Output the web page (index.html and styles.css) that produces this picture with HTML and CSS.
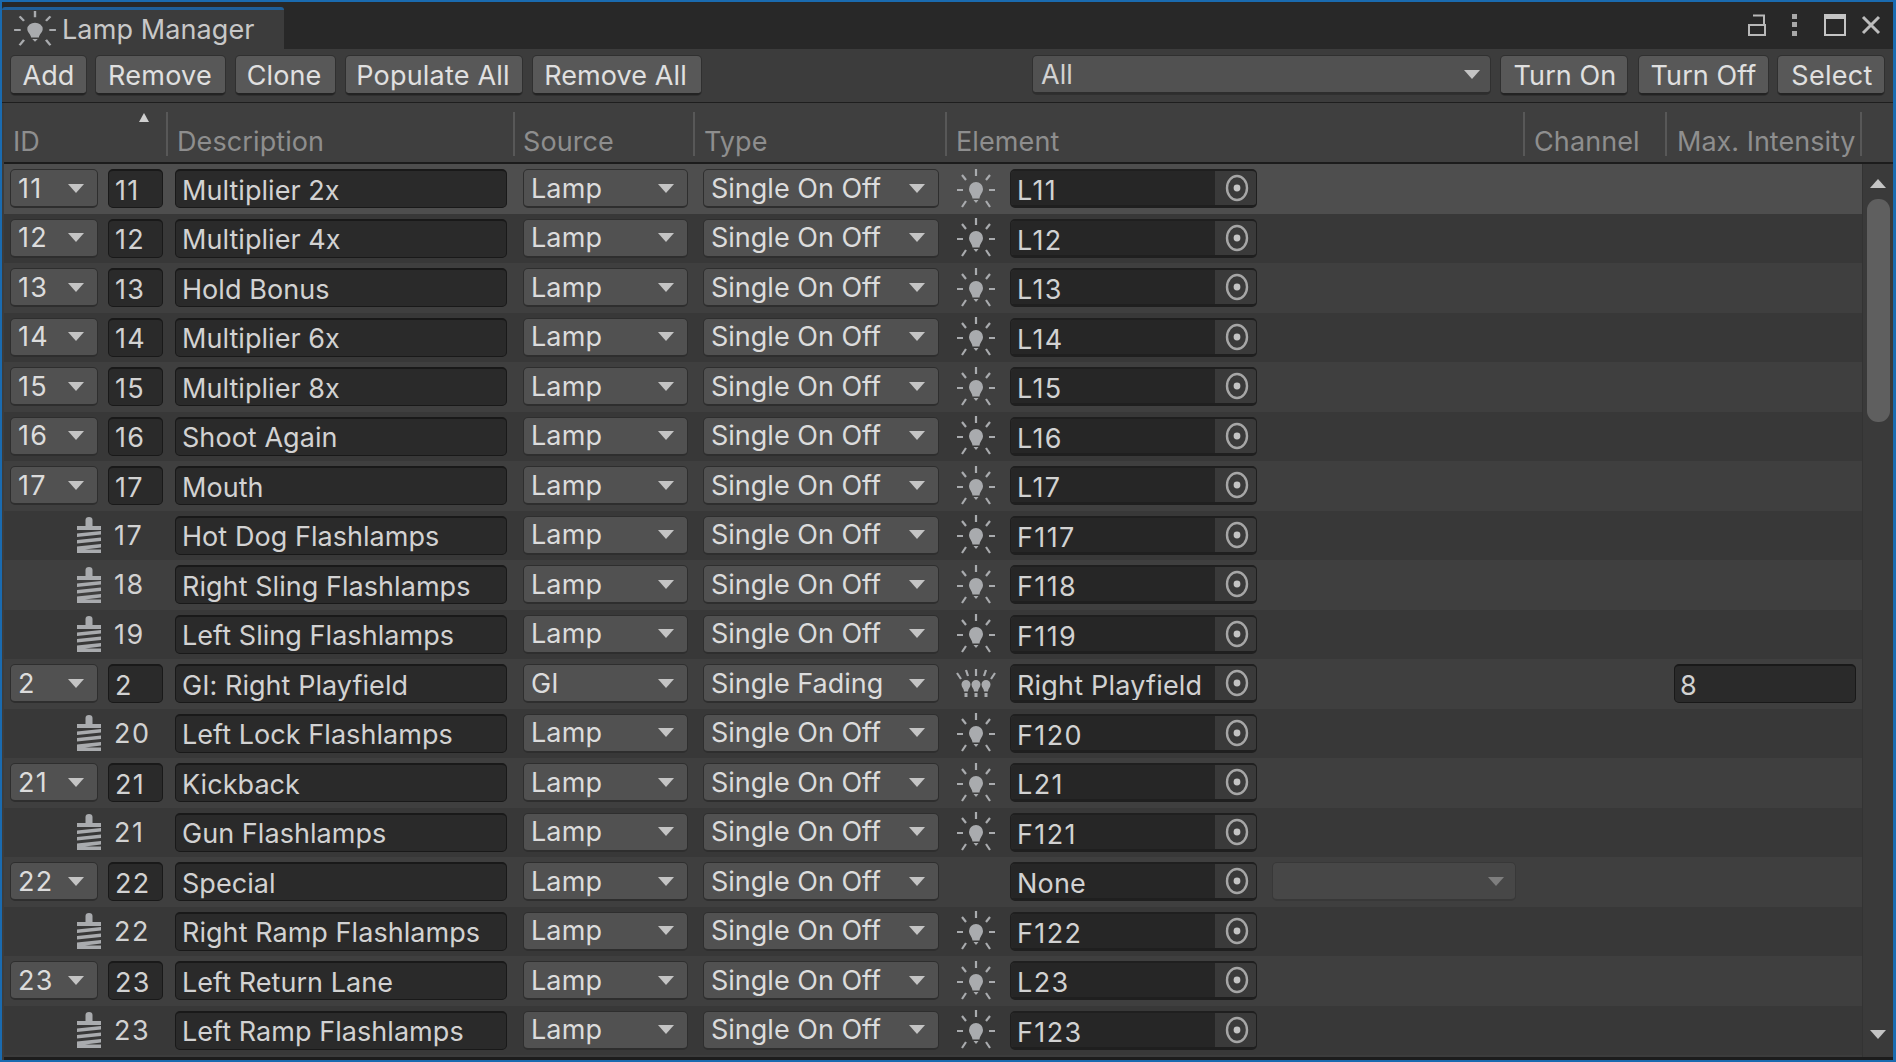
FILE: index.html
```html
<!DOCTYPE html>
<html lang="en">
<head>
    <meta charset="UTF-8">
    <title>Lamp Manager</title>
    <link rel="stylesheet" href="styles.css">
</head>
<body>
    <svg class="defs" width="0" height="0">
        <symbol id="lamp" viewBox="0 0 40 42" preserveAspectRatio="none">
            <path d="M20 14a7 7 0 0 1 7 7c0 3.500-3 5.500-3.500 9.500h-7c-.5-4-3.500-6-3.500-9.500A7 7 0 0 1 20 14z" fill="#a9abae"/>
            <path d="M17.500 32h5l-2.500 3z" fill="#a9abae"/>
            <path d="M20 1v7M1 22h6M33 22h6M6 7l4 5M34 7l-4 5M6 39l4-6M34 39l-4-6" stroke="#a9abae" stroke-width="2.200" fill="none"/>
        </symbol>
        <symbol id="multi" viewBox="0 0 40 32">
            <g fill="#a9abae">
                <path d="M10 12a4.500 4.500 0 0 1 4.500 4.500c0 3-2.500 4-2.500 7H8c0-3-2.500-4-2.500-7A4.500 4.500 0 0 1 10 12zM8.500 25h3v4h-3z"/>
                <path d="M20 12a4.500 4.500 0 0 1 4.500 4.500c0 3-2.500 4-2.500 7h-4c0-3-2.500-4-2.500-7A4.500 4.500 0 0 1 20 12zM18.500 25h3v4h-3z"/>
                <path d="M30 12a4.500 4.500 0 0 1 4.500 4.500c0 3-2.500 4-2.500 7h-4c0-3-2.500-4-2.500-7A4.500 4.500 0 0 1 30 12zM28.500 25h3v4h-3z"/>
            </g>
            <path d="M20 1v7M10 2l2 6M30 2l-2 6M1 5l4 6M39 5l-4 6" stroke="#a9abae" stroke-width="2.200" fill="none"/>
        </symbol>
        <symbol id="coil" viewBox="0 0 24 36">
            <path d="M8.500 3a3.500 3 0 0 1 7 0v6H24v4H0V9h8.500z" fill="#a9abae"/>
            <path d="M0 16.500L24 14v3.500L0 20zM0 23l24-2.500V24L0 26.500zM0 29.500L24 27v3.500L8 32.500h16V36H0z" fill="#a9abae"/>
        </symbol>
        <symbol id="target" viewBox="0 0 24 28">
            <ellipse cx="12" cy="14" rx="10" ry="12" fill="none" stroke="#a6a6a6" stroke-width="2.400"/>
            <circle cx="12" cy="14" r="3.400" fill="#c4c4c4"/>
        </symbol>
    </svg>

    <div class="window">
        <div class="titlebar">
            <div class="tab">
                <svg class="tab-icon"><use href="#lamp"/></svg>
                <span>Lamp Manager</span>
            </div>
            <div class="window-icons">
                <svg class="icon-lock" width="18" height="22" viewBox="0 0 18 22"><path d="M5 1.500h11V11M1 11h16v10H1z" fill="none" stroke="#b8b8b8" stroke-width="2"/></svg>
                <svg class="icon-dots" width="7" height="22" viewBox="0 0 7 22"><path d="M1 0h5v5H1zM1 8h5v5H1zM1 17h5v5H1z" fill="#a8a8a8"/></svg>
                <svg class="icon-max" width="22" height="22" viewBox="0 0 22 22"><path d="M0 0h22v5H0z" fill="#c4c4c4"/><path d="M1 4v17h20V4" fill="none" stroke="#c4c4c4" stroke-width="2"/></svg>
                <svg class="icon-close" width="20" height="20" viewBox="0 0 20 20"><path d="M2 2l16 16M18 2L2 18" stroke="#bcbcbc" stroke-width="3"/></svg>
            </div>
        </div>

        <div class="toolbar">
            <div class="btn btn-add">Add</div>
            <div class="btn btn-remove">Remove</div>
            <div class="btn btn-clone">Clone</div>
            <div class="btn btn-populate">Populate All</div>
            <div class="btn btn-removeall">Remove All</div>
            <div class="filter"><span>All</span><i class="arrow"></i></div>
            <div class="btn btn-on">Turn On</div>
            <div class="btn btn-off">Turn Off</div>
            <div class="btn btn-select">Select</div>
        </div>

        <div class="table-head">
            <div class="th th-id">ID<i class="sort"></i></div>
            <div class="th th-desc">Description</div>
            <div class="th th-source">Source</div>
            <div class="th th-type">Type</div>
            <div class="th th-element">Element</div>
            <div class="th th-channel">Channel</div>
            <div class="th th-max">Max. Intensity</div>
        </div>

        <div class="table-body">
            <div class="rows">
                <div class="row current">
                    <div class="drop c-id"><span>11</span><i class="arrow"></i></div><div class="field c-num">11</div><div class="field c-desc">Multiplier 2x</div><div class="drop c-source"><span>Lamp</span><i class="arrow"></i></div><div class="drop c-type"><span>Single On Off</span><i class="arrow"></i></div><svg class="c-icon"><use href="#lamp"/></svg><div class="elem"><span>L11</span><b><svg><use href="#target"/></svg></b></div>
                </div>
                <div class="row">
                    <div class="drop c-id"><span>12</span><i class="arrow"></i></div><div class="field c-num">12</div><div class="field c-desc">Multiplier 4x</div><div class="drop c-source"><span>Lamp</span><i class="arrow"></i></div><div class="drop c-type"><span>Single On Off</span><i class="arrow"></i></div><svg class="c-icon"><use href="#lamp"/></svg><div class="elem"><span>L12</span><b><svg><use href="#target"/></svg></b></div>
                </div>
                <div class="row">
                    <div class="drop c-id"><span>13</span><i class="arrow"></i></div><div class="field c-num">13</div><div class="field c-desc">Hold Bonus</div><div class="drop c-source"><span>Lamp</span><i class="arrow"></i></div><div class="drop c-type"><span>Single On Off</span><i class="arrow"></i></div><svg class="c-icon"><use href="#lamp"/></svg><div class="elem"><span>L13</span><b><svg><use href="#target"/></svg></b></div>
                </div>
                <div class="row">
                    <div class="drop c-id"><span>14</span><i class="arrow"></i></div><div class="field c-num">14</div><div class="field c-desc">Multiplier 6x</div><div class="drop c-source"><span>Lamp</span><i class="arrow"></i></div><div class="drop c-type"><span>Single On Off</span><i class="arrow"></i></div><svg class="c-icon"><use href="#lamp"/></svg><div class="elem"><span>L14</span><b><svg><use href="#target"/></svg></b></div>
                </div>
                <div class="row">
                    <div class="drop c-id"><span>15</span><i class="arrow"></i></div><div class="field c-num">15</div><div class="field c-desc">Multiplier 8x</div><div class="drop c-source"><span>Lamp</span><i class="arrow"></i></div><div class="drop c-type"><span>Single On Off</span><i class="arrow"></i></div><svg class="c-icon"><use href="#lamp"/></svg><div class="elem"><span>L15</span><b><svg><use href="#target"/></svg></b></div>
                </div>
                <div class="row">
                    <div class="drop c-id"><span>16</span><i class="arrow"></i></div><div class="field c-num">16</div><div class="field c-desc">Shoot Again</div><div class="drop c-source"><span>Lamp</span><i class="arrow"></i></div><div class="drop c-type"><span>Single On Off</span><i class="arrow"></i></div><svg class="c-icon"><use href="#lamp"/></svg><div class="elem"><span>L16</span><b><svg><use href="#target"/></svg></b></div>
                </div>
                <div class="row">
                    <div class="drop c-id"><span>17</span><i class="arrow"></i></div><div class="field c-num">17</div><div class="field c-desc">Mouth</div><div class="drop c-source"><span>Lamp</span><i class="arrow"></i></div><div class="drop c-type"><span>Single On Off</span><i class="arrow"></i></div><svg class="c-icon"><use href="#lamp"/></svg><div class="elem"><span>L17</span><b><svg><use href="#target"/></svg></b></div>
                </div>
                <div class="row">
                    <div class="c-coil"><svg><use href="#coil"/></svg></div><div class="c-num plain">17</div><div class="field c-desc">Hot Dog Flashlamps</div><div class="drop c-source"><span>Lamp</span><i class="arrow"></i></div><div class="drop c-type"><span>Single On Off</span><i class="arrow"></i></div><svg class="c-icon"><use href="#lamp"/></svg><div class="elem"><span>F117</span><b><svg><use href="#target"/></svg></b></div>
                </div>
                <div class="row">
                    <div class="c-coil"><svg><use href="#coil"/></svg></div><div class="c-num plain">18</div><div class="field c-desc">Right Sling Flashlamps</div><div class="drop c-source"><span>Lamp</span><i class="arrow"></i></div><div class="drop c-type"><span>Single On Off</span><i class="arrow"></i></div><svg class="c-icon"><use href="#lamp"/></svg><div class="elem"><span>F118</span><b><svg><use href="#target"/></svg></b></div>
                </div>
                <div class="row">
                    <div class="c-coil"><svg><use href="#coil"/></svg></div><div class="c-num plain">19</div><div class="field c-desc">Left Sling Flashlamps</div><div class="drop c-source"><span>Lamp</span><i class="arrow"></i></div><div class="drop c-type"><span>Single On Off</span><i class="arrow"></i></div><svg class="c-icon"><use href="#lamp"/></svg><div class="elem"><span>F119</span><b><svg><use href="#target"/></svg></b></div>
                </div>
                <div class="row">
                    <div class="drop c-id"><span>2</span><i class="arrow"></i></div><div class="field c-num">2</div><div class="field c-desc">GI: Right Playfield</div><div class="drop c-source"><span>GI</span><i class="arrow"></i></div><div class="drop c-type"><span>Single Fading</span><i class="arrow"></i></div><svg class="c-icon multi"><use href="#multi"/></svg><div class="elem named"><span>Right Playfield</span><b><svg><use href="#target"/></svg></b></div><div class="field c-max">8</div>
                </div>
                <div class="row">
                    <div class="c-coil"><svg><use href="#coil"/></svg></div><div class="c-num plain">20</div><div class="field c-desc">Left Lock Flashlamps</div><div class="drop c-source"><span>Lamp</span><i class="arrow"></i></div><div class="drop c-type"><span>Single On Off</span><i class="arrow"></i></div><svg class="c-icon"><use href="#lamp"/></svg><div class="elem"><span>F120</span><b><svg><use href="#target"/></svg></b></div>
                </div>
                <div class="row">
                    <div class="drop c-id"><span>21</span><i class="arrow"></i></div><div class="field c-num">21</div><div class="field c-desc">Kickback</div><div class="drop c-source"><span>Lamp</span><i class="arrow"></i></div><div class="drop c-type"><span>Single On Off</span><i class="arrow"></i></div><svg class="c-icon"><use href="#lamp"/></svg><div class="elem"><span>L21</span><b><svg><use href="#target"/></svg></b></div>
                </div>
                <div class="row">
                    <div class="c-coil"><svg><use href="#coil"/></svg></div><div class="c-num plain">21</div><div class="field c-desc">Gun Flashlamps</div><div class="drop c-source"><span>Lamp</span><i class="arrow"></i></div><div class="drop c-type"><span>Single On Off</span><i class="arrow"></i></div><svg class="c-icon"><use href="#lamp"/></svg><div class="elem"><span>F121</span><b><svg><use href="#target"/></svg></b></div>
                </div>
                <div class="row">
                    <div class="drop c-id"><span>22</span><i class="arrow"></i></div><div class="field c-num">22</div><div class="field c-desc">Special</div><div class="drop c-source"><span>Lamp</span><i class="arrow"></i></div><div class="drop c-type"><span>Single On Off</span><i class="arrow"></i></div><div class="c-icon"></div><div class="elem named"><span>None</span><b><svg><use href="#target"/></svg></b></div><div class="drop c-channel"><span></span><i class="arrow"></i></div>
                </div>
                <div class="row">
                    <div class="c-coil"><svg><use href="#coil"/></svg></div><div class="c-num plain">22</div><div class="field c-desc">Right Ramp Flashlamps</div><div class="drop c-source"><span>Lamp</span><i class="arrow"></i></div><div class="drop c-type"><span>Single On Off</span><i class="arrow"></i></div><svg class="c-icon"><use href="#lamp"/></svg><div class="elem"><span>F122</span><b><svg><use href="#target"/></svg></b></div>
                </div>
                <div class="row">
                    <div class="drop c-id"><span>23</span><i class="arrow"></i></div><div class="field c-num">23</div><div class="field c-desc">Left Return Lane</div><div class="drop c-source"><span>Lamp</span><i class="arrow"></i></div><div class="drop c-type"><span>Single On Off</span><i class="arrow"></i></div><svg class="c-icon"><use href="#lamp"/></svg><div class="elem"><span>L23</span><b><svg><use href="#target"/></svg></b></div>
                </div>
                <div class="row">
                    <div class="c-coil"><svg><use href="#coil"/></svg></div><div class="c-num plain">23</div><div class="field c-desc">Left Ramp Flashlamps</div><div class="drop c-source"><span>Lamp</span><i class="arrow"></i></div><div class="drop c-type"><span>Single On Off</span><i class="arrow"></i></div><svg class="c-icon"><use href="#lamp"/></svg><div class="elem"><span>F123</span><b><svg><use href="#target"/></svg></b></div>
                </div>
            </div>
            <div class="scrollbar">
                <i class="scroll-up"></i>
                <div class="scroll-track"><div class="scroll-thumb"></div></div>
                <i class="scroll-down"></i>
            </div>
        </div>
    </div>
</body>
</html>
```

FILE: styles.css
```css
html, body {
    margin: 0;
    height: 100%;
    overflow: hidden;
}
body {
    font-family: Inter, "Noto Sans", sans-serif;
    font-size: 27px;
    letter-spacing: .1px;
    color: #d2d2d2;
    background: #1a6bb0;
}
.defs {
    position: absolute;
}
.window {
    box-sizing: border-box;
    width: 1896px;
    height: 1062px;
    border: solid #1a6bb0;
    border-width: 2px 3px 2px 2px;
    display: flex;
    flex-direction: column;
    background: #3c3c3c;
    overflow: hidden;
}

/* title bar */
.titlebar {
    height: 47px;
    flex: none;
    background: #282828;
    display: flex;
    align-items: flex-end;
    justify-content: space-between;
}
.tab {
    box-sizing: border-box;
    width: 282px;
    height: 42px;
    background: #3c3c3c;
    border-top: 3px solid #1f5f99;
    border-radius: 3px 3px 0 0;
    display: flex;
    align-items: center;
    padding-left: 11px;
    color: #c8c8c8;
}
.tab-icon {
    width: 44px;
    height: 38px;
    margin: -2px 5px 0 0;
    flex: none;
}
.window-icons {
    display: flex;
    align-items: center;
    padding: 0 12px 13px 0;
}
.icon-dots { margin-left: 25px; }
.icon-max { margin-left: 26px; }
.icon-close { margin-left: 15px; }

/* toolbar */
.toolbar {
    height: 54px;
    flex: none;
    display: flex;
    align-items: flex-start;
    padding-top: 7px;
    box-sizing: border-box;
    border-bottom: 1px solid #1e1e1e;
}
.btn {
    box-sizing: border-box;
    height: 39px;
    padding-top: 2px;
    background: #585858;
    border-bottom: 2px solid #232323;
    box-shadow: 0 0 0 1px #303030;
    border-radius: 4px;
    color: #e0e0e0;
    display: flex;
    align-items: center;
    justify-content: center;
    flex: none;
}
.btn-add { width: 75px; margin-left: 9px; }
.btn-remove { width: 129px; margin-left: 10px; padding-right: 1px; letter-spacing: .3px; }
.btn-clone { width: 99px; margin-left: 11px; padding-right: 3px; }
.btn-populate { width: 176px; margin-left: 11px; padding-right: 2px; letter-spacing: .2px; }
.btn-removeall { width: 168px; margin-left: 11px; padding-right: 3px; }
.btn-on { width: 126px; margin-left: 11px; padding-left: 2px; }
.btn-off { width: 129px; margin-left: 12px; }
.btn-select { width: 106px; margin-left: 10px; padding-left: 2px; letter-spacing: .3px; }
.filter {
    box-sizing: border-box;
    width: 457px;
    height: 38px;
    margin-left: 332px;
    background: #515151;
    border-bottom: 2px solid #2e2e2e;
    box-shadow: 0 0 0 1px #303030;
    border-radius: 4px;
    display: flex;
    align-items: center;
    justify-content: space-between;
    padding: 0 10px 0 8px;
    flex: none;
}
.arrow {
    width: 0;
    height: 0;
    border-left: 8px solid transparent;
    border-right: 8px solid transparent;
    border-top: 9px solid #c4c4c4;
    flex: none;
}

/* table header */
.table-head {
    height: 61px;
    flex: none;
    display: flex;
    margin-left: 2px;
    background: #3f3f3f;
    border-bottom: 2px solid #1c1c1c;
    box-sizing: border-box;
    color: #8e8e8e;
}
.th {
    box-sizing: border-box;
    position: relative;
    height: 44px;
    margin-top: 9px;
    padding: 13px 0 0 9px;
    line-height: 34px;
    border-right: 2px solid #585858;
    flex: none;
}
.th-id { width: 164px; padding-left: 9px; }
.th-desc { width: 347px; }
.th-source { width: 180px; padding-left: 8px; }
.th-type { width: 252px; }
.th-element { width: 578px; }
.th-channel { width: 142px; }
.th-max { width: 195px; padding-left: 10px; white-space: nowrap; letter-spacing: 0; }
.sort {
    position: absolute;
    left: 135px;
    top: 1px;
    border-left: 5px solid transparent;
    border-right: 5px solid transparent;
    border-bottom: 9px solid #d0d0d0;
}

/* rows */
.table-body {
    flex: 1;
    display: flex;
    min-height: 0;
    margin-left: 2px;
    border-bottom: 3px solid #1c1c1c;
}
.rows {
    flex: 1;
    min-width: 0;
    overflow: hidden;
}
.row {
    height: 49.5px;
    display: flex;
    align-items: center;
    padding-left: 6px;
    background: #383838;
}
.row:nth-child(odd) {
    background: #3f3f3f;
}
.row.current {
    background: #4e4e4e;
}
.drop, .field, .elem {
    box-sizing: border-box;
    height: 39px;
    border-radius: 5px;
    flex: none;
    display: flex;
    align-items: center;
}
.drop {
    background: #515151;
    border: 1px solid #2e2e2e;
    border-bottom-width: 2px;
    justify-content: space-between;
    padding: 0 13px 0 7px;
    color: #dcdcdc;
}
.field {
    background: #2a2a2a;
    border: 1px solid #191919;
    border-top-width: 2px;
    padding: 1.5px 0 0 6px;
    color: #d2d2d2;
}
.c-id span, .c-num {
    letter-spacing: 1.2px;
}
.c-id { width: 88px; }
.c-num { width: 55px; margin-left: 10px; }
.c-num.plain { padding-left: 6px; box-sizing: border-box; letter-spacing: 1.6px; }
.c-coil {
    width: 88px;
    display: flex;
    justify-content: flex-end;
    flex: none;
}
.c-coil svg {
    width: 24px;
    height: 36px;
    margin: 0 -3px 0 0;
}
.c-desc { width: 332px; margin-left: 12px; letter-spacing: .05px; }
.c-source { width: 165px; margin-left: 16px; }
.c-type { width: 236px; margin-left: 15px; letter-spacing: 0; }
.c-icon {
    width: 40px;
    height: 42px;
    margin: 0 14px 0 17px;
    flex: none;
}
.c-icon.multi {
    height: 32px;
}
.elem {
    width: 247px;
    border: 1px solid #1f1f1f;
    border-top-width: 2px;
    border-bottom-width: 3px;
    overflow: hidden;
    background: #3a3a3a;
}
.elem span {
    flex: 1;
    height: 100%;
    padding: 5px 0 0 6px;
    background: #262626;
    box-sizing: border-box;
    white-space: nowrap;
    display: flex;
    align-items: center;
    letter-spacing: 1.4px;
}
.elem.named span {
    letter-spacing: .2px;
}
.elem b {
    width: 41px;
    height: 100%;
    padding-left: 2px;
    box-sizing: border-box;
    display: flex;
    align-items: center;
    justify-content: center;
    flex: none;
}
.elem svg {
    width: 24px;
    height: 28px;
}
.c-channel {
    width: 244px;
    margin-left: 15px;
    background: #474747;
    border-color: #383838;
    padding-right: 11px;
}
.c-channel .arrow {
    border-top-color: #7e7e7e;
}
.c-max {
    width: 182px;
    margin-left: 417px;
    padding-left: 5px;
}

/* scrollbar */
.scrollbar {
    box-sizing: border-box;
    width: 31px;
    flex: none;
    background: #3a3a3a;
    border-left: 1px solid #333;
    display: flex;
    flex-direction: column;
    align-items: center;
}
.scroll-up {
    margin-top: 15px;
    border-left: 8px solid transparent;
    border-right: 8px solid transparent;
    border-bottom: 9px solid #c4c4c4;
}
.scroll-down {
    margin-bottom: 18px;
    border-left: 8px solid transparent;
    border-right: 8px solid transparent;
    border-top: 9px solid #c4c4c4;
}
.scroll-track {
    flex: 1;
    width: 100%;
    padding-top: 11px;
}
.scroll-thumb {
    width: 23px;
    height: 223px;
    margin-left: 4px;
    background: #5f5f5f;
    border-radius: 11px;
}
```
